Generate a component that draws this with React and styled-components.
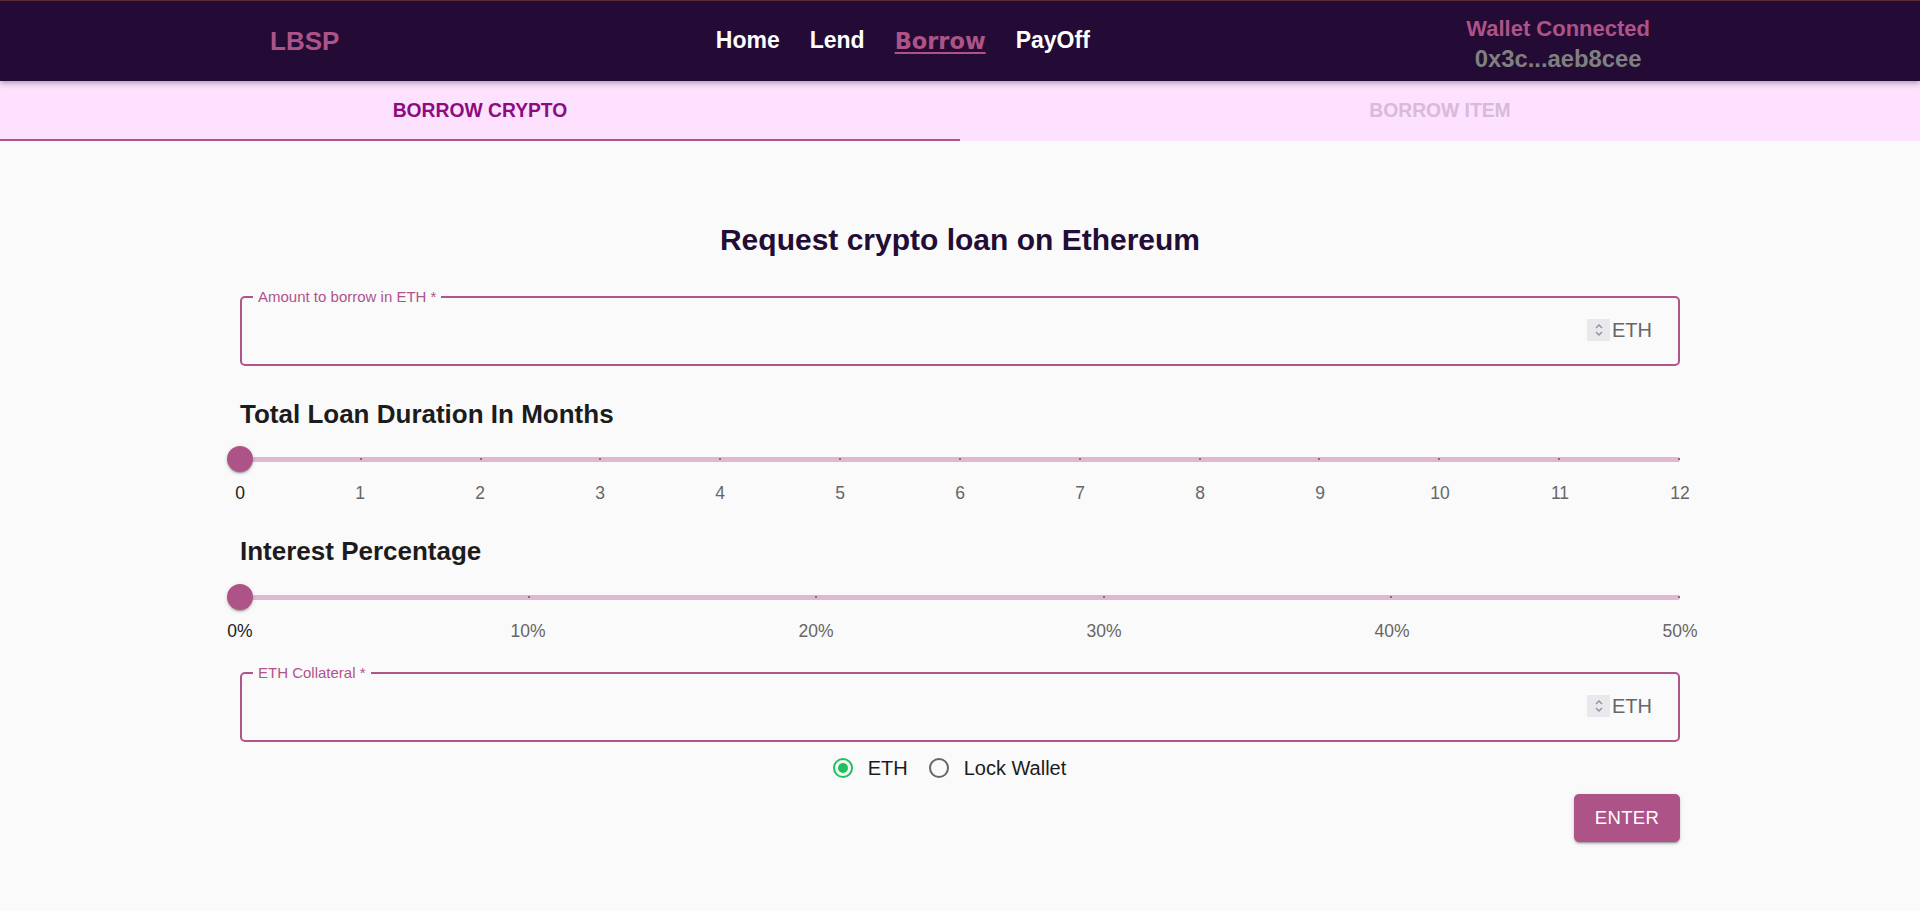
import React from "react";
import styled, { createGlobalStyle } from "styled-components";

const GlobalStyle = createGlobalStyle`
  html, body { margin: 0; padding: 0; }
  body {
    background: #fafafa;
    font-family: "Liberation Sans", Arial, sans-serif;
    color: #1c1c1c;
  }
  * { box-sizing: border-box; }
`;

const Page = styled.div`
  min-height: 911px;
  background: #fafafa;
`;

const Header = styled.header`
  position: relative;
  z-index: 2;
  height: 81px;
  border-top: 1px solid #5b2c34;
  background: #230b35;
  display: flex;
  align-items: center;
  justify-content: space-between;
  padding: 0 270px;
  box-shadow: 0 2px 4px -1px rgba(0, 0, 0, 0.2), 0 4px 5px 0 rgba(0, 0, 0, 0.14);
`;

const Logo = styled.div`
  font-size: 26px;
  font-weight: 700;
  color: #ad5387;
  line-height: 1;
`;

const Nav = styled.nav`
  display: flex;
  align-items: center;
  gap: 30px;
`;

const NavLink = styled.a`
  font-family: ${(p) => (p.$active ? '"DejaVu Sans", Verdana, sans-serif' : '"Liberation Sans", Arial, sans-serif')};
  font-size: ${(p) => (p.$active ? "22.5px" : "23px")};
  font-weight: 700;
  line-height: 1.2;
  color: ${(p) => (p.$active ? "#ad5387" : "#ffffff")};
  text-decoration: ${(p) => (p.$active ? "underline" : "none")};
  text-decoration-thickness: 2px;
  text-underline-offset: 3px;
  cursor: pointer;
`;

const Wallet = styled.div`
  display: flex;
  flex-direction: column;
  align-items: center;
  gap: 3px;
  padding-top: 6px;
`;

const WalletTitle = styled.div`
  font-size: 22px;
  font-weight: 700;
  color: #ad5387;
  line-height: 26px;
`;

const WalletAddress = styled.div`
  font-size: 23.8px;
  font-weight: 700;
  color: #808080;
  line-height: 27px;
`;

const TabBar = styled.div`
  display: grid;
  grid-template-columns: 1fr 1fr;
  height: 60px;
  background: #fde1fe;
`;

const Tab = styled.button`
  border: none;
  background: transparent;
  border-bottom: 2px solid ${(p) => (p.$active ? "#b0548a" : "transparent")};
  font-family: "Liberation Sans", Arial, sans-serif;
  font-size: 19.3px;
  font-weight: 700;
  text-transform: uppercase;
  color: ${(p) => (p.$active ? "#8c0c80" : "#d8bad9")};
  padding: 2px 0 0;
  cursor: pointer;
`;

const Main = styled.main`
  width: 1440px;
  margin: 0 auto;
  padding-top: 81px;
  padding-bottom: 40px;
`;

const Title = styled.h1`
  margin: 0;
  font-size: 30px;
  line-height: 36px;
  font-weight: 700;
  text-align: center;
  color: #230c35;
`;

const Field = styled.div`
  position: relative;
  height: 70px;
  margin-top: ${(p) => p.$mt}px;
  border: 2px solid #b0548a;
  border-radius: 5px;
  display: flex;
  align-items: center;
  justify-content: flex-end;
  padding-right: 26px;
  padding-bottom: 2px;
`;

const FieldLabel = styled.span`
  position: absolute;
  top: -9px;
  left: 11px;
  padding: 0 5px;
  background: #fafafa;
  font-size: 15px;
  line-height: 16px;
  color: #b0548a;
`;

const Spinner = styled.span`
  width: 23px;
  height: 22px;
  background: #e9e9ed;
  display: flex;
  align-items: center;
  justify-content: center;
  margin-right: 2px;
`;

const Unit = styled.span`
  font-size: 20px;
  color: #666666;
  line-height: 1;
`;

const Heading = styled.h2`
  margin: 33px 0 0;
  font-size: 26px;
  line-height: 30px;
  font-weight: 700;
  color: #1c1c1c;
`;

const SliderBox = styled.div`
  position: relative;
  height: 26px;
  margin-top: ${(p) => p.$mt}px;
`;

const Rail = styled.div`
  position: absolute;
  left: 0;
  right: 0;
  top: 10.5px;
  height: 5px;
  border-radius: 3px;
  background: #dfb9d2;
`;

const Ticks = styled.div`
  position: absolute;
  left: 0;
  right: 0;
  top: 12px;
  display: flex;
  justify-content: space-between;
`;

const Tick = styled.span`
  width: 2px;
  height: 2px;
  background: #b0548a;
`;

const Thumb = styled.span`
  position: absolute;
  left: -13px;
  top: 0;
  width: 26px;
  height: 26px;
  border-radius: 50%;
  background: #ad5387;
  box-shadow: 0 3px 1px -2px rgba(0, 0, 0, 0.2), 0 2px 2px 0 rgba(0, 0, 0, 0.14),
    0 1px 5px 0 rgba(0, 0, 0, 0.12);
`;

const Marks = styled.div`
  display: grid;
  grid-template-columns: repeat(${(p) => p.$count}, 1fr);
  margin: 11px ${(p) => -p.$half}px 0;
`;

const Mark = styled.span`
  text-align: center;
  font-size: 17.5px;
  line-height: 20px;
  color: ${(p) => (p.$active ? "#1a1a1a" : "#666666")};
`;

const RadioRow = styled.div`
  display: flex;
  justify-content: center;
  align-items: center;
  height: 52px;
`;

const RadioLabel = styled.label`
  display: flex;
  align-items: center;
  gap: 15px;
  margin-right: 21px;
  font-size: 20px;
  color: #1c1c1c;
  cursor: pointer;
`;

const RadioCircle = styled.span`
  width: 20px;
  height: 20px;
  border-radius: 50%;
  border: 2px solid ${(p) => (p.$checked ? "#1fc15b" : "#666666")};
  display: flex;
  align-items: center;
  justify-content: center;
  &::after {
    content: "";
    width: 10px;
    height: 10px;
    border-radius: 50%;
    background: ${(p) => (p.$checked ? "#1fc15b" : "transparent")};
  }
`;

const Actions = styled.div`
  display: flex;
  justify-content: flex-end;
`;

const EnterButton = styled.button`
  width: 106px;
  height: 48px;
  border: none;
  border-radius: 5px;
  background: #ad5387;
  color: #ffffff;
  font-family: "Liberation Sans", Arial, sans-serif;
  font-size: 18.5px;
  letter-spacing: 0.4px;
  cursor: pointer;
  box-shadow: 0 3px 1px -2px rgba(0, 0, 0, 0.2), 0 2px 2px 0 rgba(0, 0, 0, 0.14),
    0 1px 5px 0 rgba(0, 0, 0, 0.12);
`;

function SpinIcon() {
  return (
    <svg width="10" height="16" viewBox="0 0 10 16" fill="none">
      <path d="M2 6 L5 3 L8 6" stroke="#8d8d98" strokeWidth="1.3" />
      <path d="M2 10 L5 13 L8 10" stroke="#8d8d98" strokeWidth="1.3" />
    </svg>
  );
}

function NumberField({ label, mt }) {
  return (
    <Field $mt={mt}>
      <FieldLabel>{label}</FieldLabel>
      <Spinner>
        <SpinIcon />
      </Spinner>
      <Unit>ETH</Unit>
    </Field>
  );
}

function Slider({ marks, mt }) {
  const step = 1440 / (marks.length - 1);
  return (
    <>
      <SliderBox $mt={mt}>
        <Rail />
        <Ticks>
          {marks.map((m) => (
            <Tick key={m} />
          ))}
        </Ticks>
        <Thumb />
      </SliderBox>
      <Marks $count={marks.length} $half={step / 2}>
        {marks.map((m, i) => (
          <Mark key={m} $active={i === 0}>
            {m}
          </Mark>
        ))}
      </Marks>
    </>
  );
}

const months = Array.from({ length: 13 }, (_, i) => String(i));
const percents = ["0%", "10%", "20%", "30%", "40%", "50%"];

export default function App() {
  return (
    <Page>
      <GlobalStyle />
      <Header>
        <Logo>LBSP</Logo>
        <Nav>
          <NavLink>Home</NavLink>
          <NavLink>Lend</NavLink>
          <NavLink $active>Borrow</NavLink>
          <NavLink>PayOff</NavLink>
        </Nav>
        <Wallet>
          <WalletTitle>Wallet Connected</WalletTitle>
          <WalletAddress>0x3c...aeb8cee</WalletAddress>
        </Wallet>
      </Header>
      <TabBar>
        <Tab $active>Borrow Crypto</Tab>
        <Tab>Borrow Item</Tab>
      </TabBar>
      <Main>
        <Title>Request crypto loan on Ethereum</Title>
        <NumberField label="Amount to borrow in ETH *" mt={38} />
        <Heading>Total Loan Duration In Months</Heading>
        <Slider marks={months} mt={17} />
        <Heading>Interest Percentage</Heading>
        <Slider marks={percents} mt={18} />
        <NumberField label="ETH Collateral *" mt={31} />
        <RadioRow>
          <RadioLabel>
            <RadioCircle $checked />
            ETH
          </RadioLabel>
          <RadioLabel>
            <RadioCircle />
            Lock Wallet
          </RadioLabel>
        </RadioRow>
        <Actions>
          <EnterButton>ENTER</EnterButton>
        </Actions>
      </Main>
    </Page>
  );
}
